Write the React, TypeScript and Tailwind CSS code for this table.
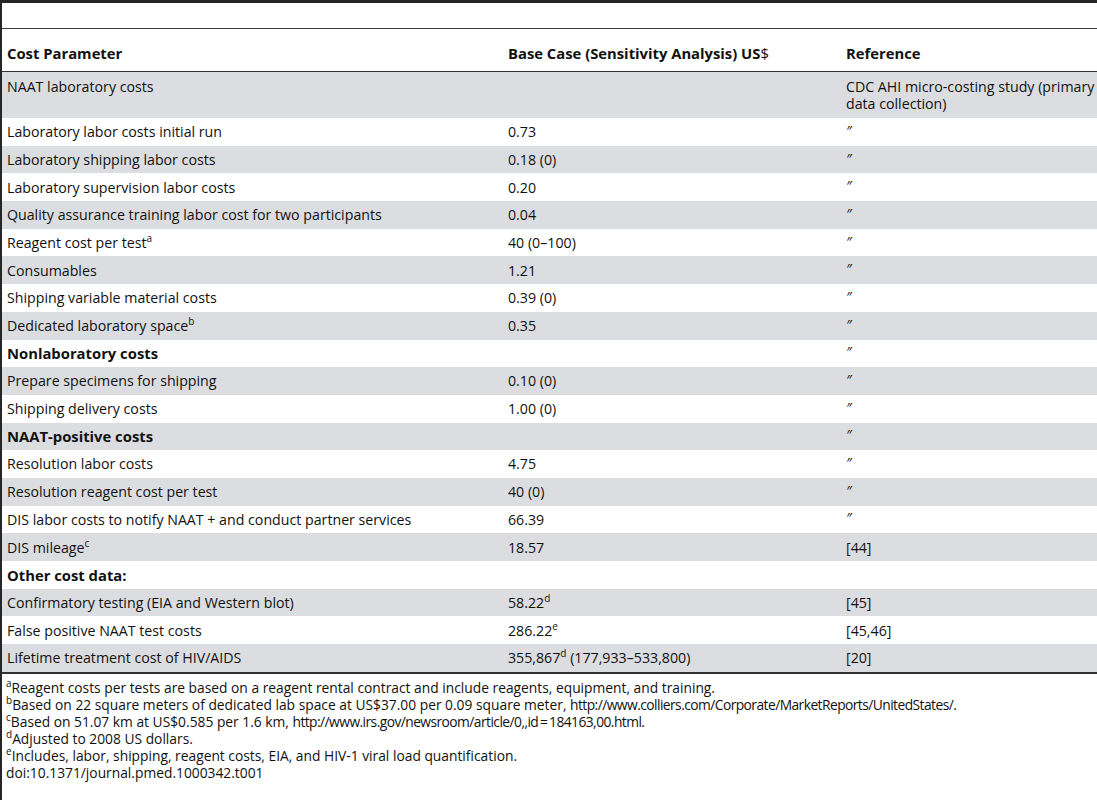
import React from "react";

type Row = {
    label: string;
    labelSup?: string;
    bold?: boolean;
    value?: string;
    valueSup?: string;
    valueRest?: string;
    ref?: string;
};

const DITTO = "\u2033";

const ROWS: Row[] = [
    { label: "Laboratory labor costs initial run", value: "0.73", ref: DITTO },
    { label: "Laboratory shipping labor costs", value: "0.18 (0)", ref: DITTO },
    { label: "Laboratory supervision labor costs", value: "0.20", ref: DITTO },
    { label: "Quality assurance training labor cost for two participants", value: "0.04", ref: DITTO },
    { label: "Reagent cost per test", labelSup: "a", value: "40 (0\u2013100)", ref: DITTO },
    { label: "Consumables", value: "1.21", ref: DITTO },
    { label: "Shipping variable material costs", value: "0.39 (0)", ref: DITTO },
    { label: "Dedicated laboratory space", labelSup: "b", value: "0.35", ref: DITTO },
    { label: "Nonlaboratory costs", bold: true, ref: DITTO },
    { label: "Prepare specimens for shipping", value: "0.10 (0)", ref: DITTO },
    { label: "Shipping delivery costs", value: "1.00 (0)", ref: DITTO },
    { label: "NAAT-positive costs", bold: true, ref: DITTO },
    { label: "Resolution labor costs", value: "4.75", ref: DITTO },
    { label: "Resolution reagent cost per test", value: "40 (0)", ref: DITTO },
    { label: "DIS labor costs to notify NAAT + and conduct partner services", value: "66.39", ref: DITTO },
    { label: "DIS mileage", labelSup: "c", value: "18.57", ref: "[44]" },
    { label: "Other cost data:", bold: true },
    { label: "Confirmatory testing (EIA and Western blot)", value: "58.22", valueSup: "d", ref: "[45]" },
    { label: "False positive NAAT test costs", value: "286.22", valueSup: "e", ref: "[45,46]" },
    { label: "Lifetime treatment cost of HIV/AIDS", value: "355,867", valueSup: "d", valueRest: " (177,933\u2013533,800)", ref: "[20]" },
];

const NOTES: { sup: string; text: string; url?: string; tail?: string }[] = [
    { sup: "a", text: "Reagent costs per tests are based on a reagent rental contract and include reagents, equipment, and training." },
    { sup: "b", text: "Based on 22 square meters of dedicated lab space at US$37.00 per 0.09 square meter, ", url: "http://www.colliers.com/Corporate/MarketReports/UnitedStates/", tail: "." },
    { sup: "c", text: "Based on 51.07 km at US$0.585 per 1.6 km, ", url: "http://www.irs.gov/newsroom/article/0,,id\u2009=\u2009184163,00.html", tail: "." },
    { sup: "d", text: "Adjusted to 2008 US dollars." },
    { sup: "e", text: "Includes, labor, shipping, reagent costs, EIA, and HIV-1 viral load quantification." },
];

const Sup = ({ c }: { c: string }) => (
    <sup className="text-[10px] relative -top-[6px]">{c}</sup>
);

export default function App() {
    return (
        <div
            className="w-[1097px] h-[800px] overflow-hidden bg-white text-[14.2px] text-[#111] border-l-2 border-t-[3px] border-[#262626]"
            style={{ fontFamily: '"Open Sans", "Noto Sans", sans-serif' }}
        >
            {/* caption space */}
            <div className="h-[26px] border-b border-[#3a3a3a]" />

            {/* header */}
            <div className="grid grid-cols-[501px_338px_1fr] h-[43px] pt-[6px] items-center font-bold text-[14.8px] border-b-[1.5px] border-[#333]">
                <div className="pl-[5px]">Cost Parameter</div>
                <div className="pl-[5px]">
                    Base Case (Sensitivity Analysis) US<span className="font-normal">$</span>
                </div>
                <div className="pl-[5px]">Reference</div>
            </div>

            {/* first group row */}
            <div className="grid grid-cols-[501px_338px_1fr] h-[46px] pt-[6px] leading-[17px] bg-[#dcdde0]">
                <div className="pl-[5px]">NAAT laboratory costs</div>
                <div />
                <div className="pl-[5px] w-[262px] whitespace-normal">CDC AHI micro-costing study (primary data collection)</div>
            </div>

            {ROWS.map((r, i) => (
                <div
                    key={r.label}
                    className={`grid grid-cols-[501px_338px_1fr] h-[27.7px] items-center ${i % 2 === 1 ? "bg-[#dcdde0]" : "bg-white"}`}
                >
                    <div className={`pl-[5px] whitespace-nowrap ${r.bold ? "font-bold text-[14.8px]" : ""}`}>
                        {r.label}
                        {r.labelSup && <Sup c={r.labelSup} />}
                    </div>
                    <div className="pl-[5px] whitespace-nowrap">
                        {r.value}
                        {r.valueSup && <Sup c={r.valueSup} />}
                        {r.valueRest}
                    </div>
                    <div className={`pl-[5px] ${r.ref === DITTO ? "italic text-[14px] pb-[3px]" : ""}`}>{r.ref}</div>
                </div>
            ))}

            {/* footnotes */}
            <div className="border-t-2 border-[#333] pt-[5px] pl-[4px] text-[13.8px] leading-[17px]">
                {NOTES.map((n) => (
                    <div key={n.sup} className="whitespace-nowrap">
                        <Sup c={n.sup} />
                        {n.text}
                        {n.url && <span className="tracking-[-0.55px]">{n.url}</span>}
                        {n.tail}
                    </div>
                ))}
                <div>doi:10.1371/journal.pmed.1000342.t001</div>
            </div>
        </div>
    );
}
